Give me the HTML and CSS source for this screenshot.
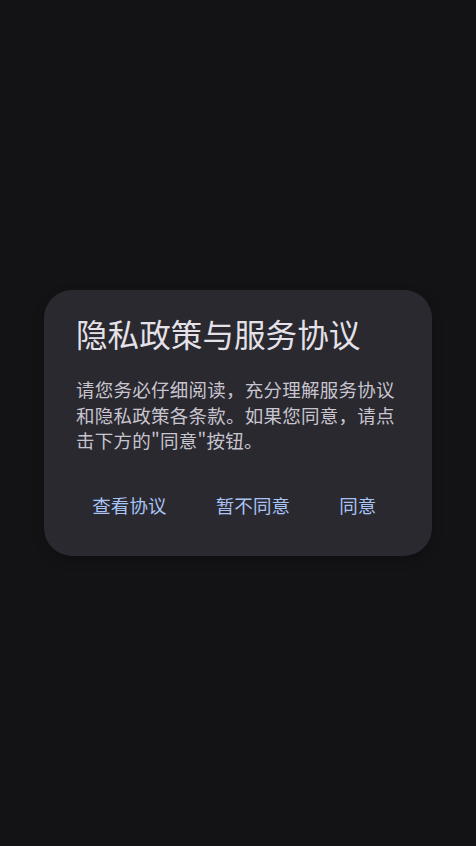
FILE: index.html
```html
<!DOCTYPE html>
<html lang="zh-CN">
<head>
<meta charset="utf-8">
<title>隐私政策与服务协议</title>
<link rel="stylesheet" href="styles.css">
</head>
<body>
<div class="screen">
  <div class="dialog" role="dialog">
    <h1 class="dialog-title">隐私政策与服务协议</h1>
    <p class="dialog-body">请您务必仔细阅读，充分理解服务协议和隐私政策各条款。如果您同意，请点击下方的"同意"按钮。</p>
    <div class="dialog-actions">
      <button class="text-btn">查看协议</button>
      <button class="text-btn">暂不同意</button>
      <button class="text-btn">同意</button>
    </div>
  </div>
</div>
</body>
</html>
```
FILE: styles.css
```css
* { box-sizing: border-box; }
html, body {
  margin: 0;
  padding: 0;
  height: 100%;
  background: #131316;
}
body {
  font-family: "Noto Sans CJK SC", "Noto Sans", sans-serif;
}
.screen {
  height: 100%;
  display: flex;
  align-items: center;
  justify-content: center;
}
.dialog {
  width: 388px;
  background: #2a2930;
  border-radius: 28px;
  padding: 23px 32px 24px 32px;
  box-shadow: 0 4px 12px rgba(0,0,0,0.2);
}
.dialog-title {
  margin: 0 0 24px 0;
  font-size: 31.6px;
  line-height: 40px;
  font-weight: 400;
  color: #e5e1e8;
}
.dialog-body {
  margin: 0;
  font-size: 18.5px;
  line-height: 25.6px;
  letter-spacing: 0.25px;
  color: #c8c5cf;
}
.dialog-actions {
  margin: 25px 7.5px 0 0;
  display: flex;
  justify-content: flex-end;
  gap: 17px;
}
.text-btn {
  flex: none;
  white-space: nowrap;
  height: 53px;
  padding: 0 16px;
  border: 0;
  background: transparent;
  font-family: inherit;
  font-size: 18.5px;
  font-weight: 400;
  letter-spacing: 0.13px;
  color: #a9c3f5;
  border-radius: 26px;
  cursor: pointer;
}
```
